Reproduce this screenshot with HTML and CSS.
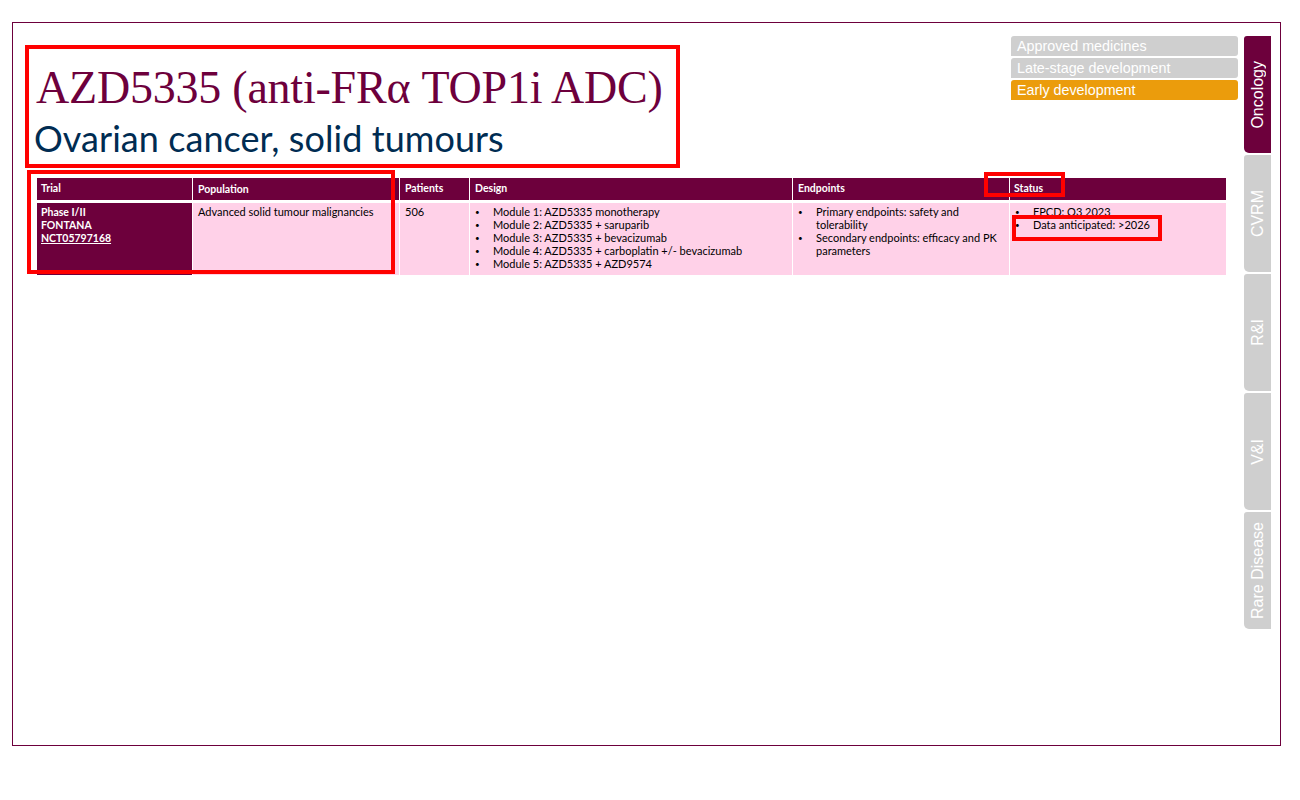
FILE: index.html
```html
<!DOCTYPE html>
<html lang="en">
<head>
<meta charset="utf-8">
<title>AZD5335</title>
<link rel="stylesheet" href="styles.css">
</head>
<body>
<div class="slide">
  <main class="main">
    <header class="head">
      <div class="titles">
        <h1>AZD5335 (anti-FRα TOP1i ADC)</h1>
        <h2>Ovarian cancer, solid tumours</h2>
      </div>
      <div class="legend">
        <div class="pill">Approved medicines</div>
        <div class="pill">Late-stage development</div>
        <div class="pill active">Early development</div>
      </div>
    </header>
    <div class="table">
      <div class="th first">Trial</div>
      <div class="th pop">Population</div>
      <div class="th">Patients</div>
      <div class="th">Design</div>
      <div class="th">Endpoints</div>
      <div class="th last">Status</div>
      <div class="td trial">Phase I/II<br>FONTANA<br><u>NCT05797168</u></div>
      <div class="td">Advanced solid tumour malignancies</div>
      <div class="td">506</div>
      <div class="td">
        <ul>
          <li>Module 1: AZD5335 monotherapy</li>
          <li>Module 2: AZD5335 + saruparib</li>
          <li>Module 3: AZD5335 + bevacizumab</li>
          <li>Module 4: AZD5335 + carboplatin +/- bevacizumab</li>
          <li>Module 5: AZD5335 + AZD9574</li>
        </ul>
      </div>
      <div class="td">
        <ul>
          <li>Primary endpoints: safety and tolerability</li>
          <li>Secondary endpoints: efficacy and PK parameters</li>
        </ul>
      </div>
      <div class="td">
        <ul>
          <li>FPCD: Q3 2023</li>
          <li>Data anticipated: &gt;2026</li>
        </ul>
      </div>
    </div>
  </main>
  <nav class="tabs">
    <div class="tab active"><span>Oncology</span></div>
    <div class="tab"><span>CVRM</span></div>
    <div class="tab"><span>R&amp;I</span></div>
    <div class="tab"><span>V&amp;I</span></div>
    <div class="tab"><span>Rare Disease</span></div>
  </nav>
  <div class="mark mark-title"></div>
  <div class="mark mark-pop"></div>
  <div class="mark mark-status"></div>
  <div class="mark mark-data"></div>
</div>
</body>
</html>
```
FILE: styles.css
```css
* { box-sizing: border-box; }
html, body { margin: 0; padding: 0; background: #fff; }
.slide {
  position: relative;
  display: flex;
  margin: 22px 0 0 12px;
  width: 1269px;
  height: 724px;
  border: 1px solid #6d003c;
}
.main { width: 1225px; padding: 13px 0 0 24px; }
.head { display: flex; justify-content: space-between; height: 142px; }
.titles { padding-top: 24px; }
h1 {
  margin: 0 0 0 -1px;
  font: 400 46px/56px "Liberation Serif", serif;
  color: #6d003c;
  letter-spacing: -0.22px;
}
h2 {
  margin: 0 0 0 -3px;
  font: 400 36px/44px "Lato", sans-serif;
  color: #002c52;
  letter-spacing: 0.06px;
}
.legend { display: flex; flex-direction: column; gap: 2px; width: 227px; }
.pill {
  height: 20px;
  padding-left: 6px;
  background: #cfcfcf;
  border-radius: 3px 3px 3px 0;
  color: #fff;
  font: 14.3px/21px "Liberation Sans", sans-serif;
}
.pill.active { background: #eb9c0c; }
.table {
  display: grid;
  grid-template-columns: 156px 207px 70px 323px 217px 216px;
  grid-template-rows: 22px 72px;
  row-gap: 3px;
  width: 1189px;
  font: 11px/13px "Lato", sans-serif;
}
.th {
  background: #6d003c;
  border-right: 1px solid #fff;
  color: #fff;
  font-size: 10.5px;
  font-weight: 700;
  padding: 4px 5px 0;
}
.th.first { padding-left: 4px; }
.th.last { border-right: 0; padding-left: 4px; }
.th.pop { padding-top: 5px; }
.td {
  background: #ffd1e8;
  border-right: 1px solid #fff;
  color: #000;
  padding: 2px 5px 0;
}
.td:last-child { border-right: 0; }
.td.trial { background: #6d003c; color: #fff; font-size: 10.5px; font-weight: 700; padding: 3px 5px 0 4px; }
ul { list-style: none; margin: 0; padding: 0; }
li { padding-left: 18px; text-indent: -18px; }
li::before {
  content: "•";
  display: inline-block;
  width: 18px;
  text-indent: 0;
  font-size: 8px;
  line-height: 0;
  vertical-align: 1px;
}
.tabs { display: flex; flex-direction: column; gap: 2px; margin: 13px 0 0 6px; width: 27px; }
.tab {
  height: 117px;
  padding-left: 1px;
  background: #cfcfcf;
  border-radius: 3px 0 0 5px;
  color: #fff;
  font: 16px/26px "Liberation Sans", sans-serif;
  display: flex;
  align-items: center;
  justify-content: center;
}
.tab span { writing-mode: vertical-rl; transform: rotate(180deg); white-space: nowrap; }
.tab.active { background: #6d003c; }
.mark { position: absolute; border: 4px solid #f00; }
.mark-title { left: 12px; top: 22px; width: 655px; height: 123px; }
.mark-pop { left: 14px; top: 147px; width: 368px; height: 104px; }
.mark-status { left: 971px; top: 149px; width: 81px; height: 25px; }
.mark-data { left: 999px; top: 192px; width: 150px; height: 26px; }
```
